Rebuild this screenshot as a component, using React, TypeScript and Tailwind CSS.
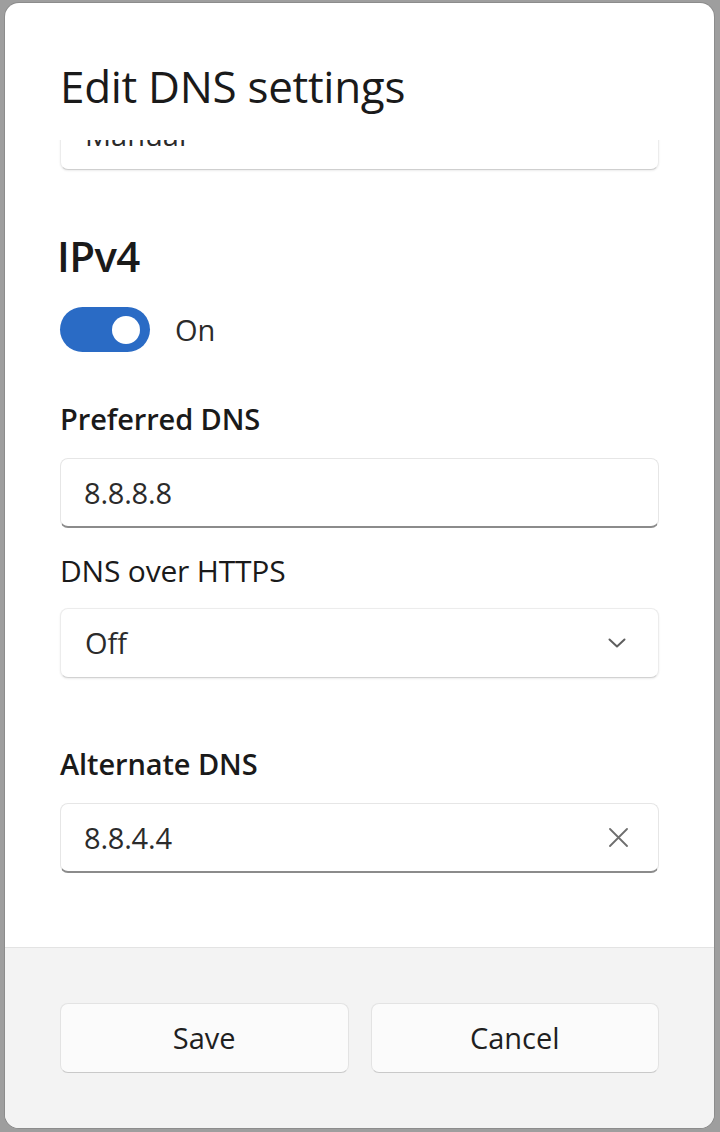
import React from 'react'

const font = { fontFamily: '"Open Sans", "Noto Sans", sans-serif' }

function TextBox({ value, clear }: { value: string; clear?: boolean }) {
  return (
    <div className="flex items-center justify-between h-[70px] rounded-[8px] bg-white border border-[#e6e6e6] border-b-[2px] border-b-[#8b8b8b] pl-[23px] pr-[30px]">
      <span className="text-[29px] text-[#2b2b2b] tracking-[-0.2px]">{value}</span>
      {clear && (
        <svg width="19" height="19" viewBox="0 0 19 19" fill="none">
          <path d="M1 1L18 18M18 1L1 18" stroke="#6e6e6e" strokeWidth="1.8" strokeLinecap="round" />
        </svg>
      )}
    </div>
  )
}

export default function App() {
  return (
    <div style={font} className="w-[720px] h-[1132px] bg-[#9e9e9e] pt-[3px] pl-[5px] pr-[6px] pb-[4px]">
      <div className="h-full flex flex-col rounded-[14px] bg-white overflow-hidden shadow-[0_0_0_1px_#8c8c8c]">
        <div className="px-[55px] pt-[59px] pb-[30px]">
          <h1 className="text-[44px] leading-[48px] text-[#1a1a1a] tracking-[-0.3px]">Edit DNS settings</h1>
        </div>

        <div className="flex-1 overflow-hidden px-[55px]">
          <div className="-mt-[40px]">
            <div className="h-[70px] rounded-[8px] bg-white border border-[#ececec] border-b-[#cfcfcf] shadow-[0_1px_2px_rgba(0,0,0,0.08)] flex items-center pl-[24px]">
              <span className="text-[29px] leading-[36px] text-[#2b2b2b]">Manual</span>
            </div>

            <h2 className="mt-[62px] -ml-[3px] text-[42px] leading-[48px] font-semibold text-[#1a1a1a] tracking-[-0.6px]">IPv4</h2>

            <div className="mt-[27px] flex items-center gap-[25px]">
              <div className="w-[90px] h-[45px] rounded-full bg-[#2a6bc5] flex items-center justify-end pr-[10px]">
                <div className="w-[28px] h-[28px] rounded-full bg-white" />
              </div>
              <span className="text-[29px] text-[#2b2b2b]">On</span>
            </div>

            <div className="mt-[49px] text-[29px] leading-[36px] font-semibold text-[#1a1a1a] tracking-[-0.1px]">Preferred DNS</div>
            <div className="mt-[21px]">
              <TextBox value="8.8.8.8" />
            </div>

            <div className="mt-[25px] text-[30px] leading-[36px] text-[#1a1a1a] tracking-[-0.2px]">DNS over HTTPS</div>
            <div className="mt-[19px] flex items-center justify-between h-[70px] rounded-[8px] bg-white border border-[#ececec] border-b-[#d2d2d2] shadow-[0_1px_2px_rgba(0,0,0,0.08)] pl-[24px] pr-[32px]">
              <span className="text-[29px] text-[#2b2b2b]">Off</span>
              <svg width="18" height="10" viewBox="0 0 18 10" fill="none">
                <path d="M1.5 1.5L9 8.5L16.5 1.5" stroke="#5e5e5e" strokeWidth="2" strokeLinecap="round" strokeLinejoin="round" />
              </svg>
            </div>

            <div className="mt-[68px] text-[29px] leading-[36px] font-semibold text-[#1a1a1a] tracking-[-0.1px]">Alternate DNS</div>
            <div className="mt-[21px]">
              <TextBox value="8.8.4.4" clear />
            </div>
          </div>
        </div>

        <div className="h-[181px] shrink-0 bg-[#f3f3f3] border-t border-[#e3e3e3] px-[55px] pt-[55px]">
          <div className="grid grid-cols-2 gap-[22px]">
            <button className="h-[70px] rounded-[8px] bg-[#fbfbfb] border border-[#e3e3e3] border-b-[#c9c9c9] text-[29px] text-[#1f1f1f]">
              Save
            </button>
            <button className="h-[70px] rounded-[8px] bg-[#fbfbfb] border border-[#e3e3e3] border-b-[#c9c9c9] text-[29px] text-[#1f1f1f]">
              Cancel
            </button>
          </div>
        </div>
      </div>
    </div>
  )
}
